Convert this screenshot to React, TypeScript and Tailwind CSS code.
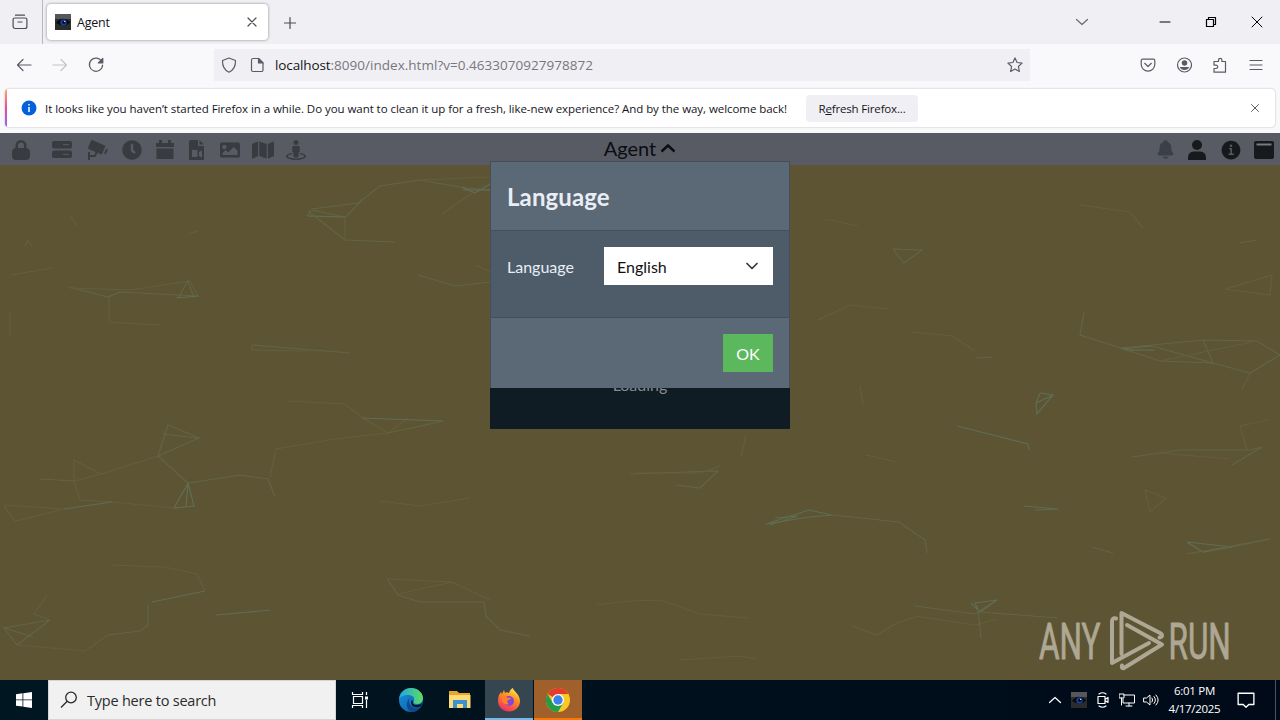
import type { ReactNode } from "react";
import { BiSolidCctv } from "react-icons/bi";
import { FaClock, FaImage, FaMap, FaStreetView } from "react-icons/fa";
import { IoInformationCircle, IoNotifications } from "react-icons/io5";

type Line = { points: string; tone: "faint" | "soft" | "strong" };

const tones = {
  faint: "stroke-[#655e3c]",
  soft: "stroke-[#626544]",
  strong: "stroke-[#606d55]",
};

// page coordinates, the canvas starts right below the toolbar
const lines: Line[] = [
  { points: "11,275 52,268", tone: "faint" },
  { points: "69,287 108,297 120,292 198,296", tone: "soft" },
  { points: "69,288 130,290 190,281 198,296", tone: "faint" },
  { points: "178,298 188,281 194,298", tone: "soft" },
  { points: "176,298 199,296", tone: "strong" },
  { points: "109,297 109,322 160,325", tone: "faint" },
  { points: "10,312 10,336", tone: "faint" },
  { points: "25,247 28,240 32,247", tone: "faint" },
  { points: "70,216 77,226", tone: "faint" },
  { points: "188,234 198,231", tone: "faint" },
  { points: "307,216 312,209 358,203 380,186 420,180 465,188 490,190", tone: "soft" },
  { points: "308,216 346,217 362,200", tone: "soft" },
  { points: "308,216 346,217", tone: "strong" },
  { points: "312,210 345,217", tone: "soft" },
  { points: "308,211 345,240 395,242", tone: "soft" },
  { points: "345,217 345,240", tone: "faint" },
  { points: "420,180 490,177", tone: "faint" },
  { points: "442,214 472,193", tone: "faint" },
  { points: "462,187 475,193 490,184", tone: "strong" },
  { points: "463,190 490,190", tone: "strong" },
  { points: "418,275 455,286 490,282", tone: "soft" },
  { points: "476,265 490,272", tone: "faint" },
  { points: "252,345 252,350 310,351", tone: "faint" },
  { points: "252,345 350,353", tone: "soft" },
  { points: "288,401 345,404 366,420 388,433 408,418", tone: "faint" },
  { points: "362,418 443,421", tone: "strong" },
  { points: "388,433 430,424 443,421", tone: "soft" },
  { points: "388,433 335,439 276,449 270,477", tone: "faint" },
  { points: "158,456 168,425 199,438 158,456", tone: "soft" },
  { points: "162,434 199,438", tone: "soft" },
  { points: "158,456 101,474 74,460 74,481 101,474", tone: "faint" },
  { points: "40,479 74,481", tone: "soft" },
  { points: "158,456 188,483 240,475 268,479 275,497", tone: "soft" },
  { points: "188,483 174,508 194,506 188,483 186,506", tone: "strong" },
  { points: "74,481 80,500 112,502 174,508", tone: "faint" },
  { points: "64,509 112,502", tone: "strong" },
  { points: "4,506 15,521 64,509 4,505", tone: "faint" },
  { points: "112,565 165,567 197,574 205,591", tone: "faint" },
  { points: "152,602 205,591", tone: "strong" },
  { points: "216,615 270,610", tone: "strong" },
  { points: "108,635 140,631 148,625 148,605", tone: "soft" },
  { points: "17,645 85,651 108,635", tone: "faint" },
  { points: "4,628 50,620 17,645 4,628 33,637", tone: "soft" },
  { points: "47,595 34,614 50,620", tone: "faint" },
  { points: "387,579 452,582 490,600", tone: "faint" },
  { points: "387,579 398,595 420,602 484,602 486,616 500,630 530,636", tone: "soft" },
  { points: "398,594 452,582", tone: "faint" },
  { points: "380,501 420,506 470,498", tone: "faint" },
  { points: "630,474 718,471 700,488 676,485", tone: "soft" },
  { points: "636,473 700,473 720,466", tone: "faint" },
  { points: "597,605 630,601 660,600 700,614 748,618", tone: "faint" },
  { points: "680,660 740,656 756,659", tone: "faint" },
  { points: "741,457 746,436", tone: "faint" },
  { points: "866,455 897,462", tone: "faint" },
  { points: "825,219 858,226", tone: "faint" },
  { points: "893,249 922,250 904,263 893,249", tone: "soft" },
  { points: "818,320 850,305 888,309", tone: "faint" },
  { points: "912,332 952,336 975,351", tone: "faint" },
  { points: "976,358 992,357", tone: "soft" },
  { points: "860,386 863,405", tone: "faint" },
  { points: "1080,205 1130,212 1143,228", tone: "faint" },
  { points: "1240,243 1256,240", tone: "soft" },
  { points: "1225,289 1270,295 1272,275 1225,289", tone: "faint" },
  { points: "1084,312 1080,335 1121,348 1203,340 1257,341 1280,355", tone: "soft" },
  { points: "1121,348 1160,361 1213,363 1250,373 1280,355", tone: "soft" },
  { points: "1121,349 1152,346", tone: "strong" },
  { points: "1125,350 1155,350", tone: "strong" },
  { points: "1152,346 1213,363 1203,340", tone: "soft" },
  { points: "1160,361 1257,341", tone: "faint" },
  { points: "1250,373 1242,390", tone: "faint" },
  { points: "1040,393 1053,395 1036,403 1040,393", tone: "strong" },
  { points: "1036,403 1037,414 1053,395", tone: "strong" },
  { points: "957,426 1028,444 1029,450", tone: "strong" },
  { points: "1132,457 1180,450 1250,450 1262,447 1232,465", tone: "soft" },
  { points: "1247,450 1240,426 1268,420", tone: "faint" },
  { points: "1160,453 1230,459", tone: "faint" },
  { points: "1145,490 1166,498 1150,512 1145,490", tone: "faint" },
  { points: "766,524 809,517 832,515 809,510 766,524", tone: "strong" },
  { points: "775,518 798,516 770,525", tone: "strong" },
  { points: "832,515 899,522 925,540 927,553", tone: "soft" },
  { points: "1024,506 1058,509 1035,510", tone: "strong" },
  { points: "1092,547 1113,553", tone: "soft" },
  { points: "1187,542 1232,547 1203,552 1187,542", tone: "strong" },
  { points: "1187,554 1270,539", tone: "soft" },
  { points: "1232,547 1270,539", tone: "soft" },
  { points: "853,626 877,635 895,624 915,617", tone: "faint" },
  { points: "915,606 975,614 997,600", tone: "soft" },
  { points: "915,616 975,625 997,619", tone: "faint" },
  { points: "971,603 980,612 997,600 975,603 978,609", tone: "strong" },
  { points: "978,610 981,638", tone: "soft" },
  { points: "980,612 1058,618", tone: "soft" },
];

function Lines() {
  return (
    <svg
      className="absolute inset-0 h-full w-full"
      viewBox="0 165 1280 515"
      fill="none"
      strokeWidth="1.2"
    >
      {lines.map((line) => (
        <polyline key={line.points} points={line.points} className={tones[line.tone]} />
      ))}
    </svg>
  );
}

function Glyph({
  children,
  className = "size-4",
}: {
  children: ReactNode;
  className?: string;
}) {
  return (
    <svg
      viewBox="0 0 16 16"
      className={`${className} shrink-0`}
      fill="none"
      stroke="currentColor"
      strokeWidth="1.2"
      strokeLinecap="round"
      strokeLinejoin="round"
    >
      {children}
    </svg>
  );
}

function EyeLogo() {
  return (
    <svg viewBox="0 0 16 16" className="size-4 shrink-0">
      <rect width="16" height="16" fill="#2b2c2e" />
      <rect width="16" height="5" fill="#55575a" />
      <path d="M1 9q6-8 14-1-5 7-14 1Z" fill="#090a10" />
      <circle cx="8.5" cy="8.5" r="3.2" fill="#183f91" />
      <circle cx="8.8" cy="8.2" r="1.5" fill="#04060d" />
      <circle cx="9.6" cy="7.4" r=".7" fill="#d7e5ff" />
    </svg>
  );
}

function TabStrip() {
  return (
    <div className="flex h-11 items-center bg-[#f0f0f4] text-[#4b4b54]">
      <div className="flex h-11 w-[43px] items-center justify-center border-r border-[#b8b8bd] pr-0.5">
        <Glyph className="size-4">
          <path d="M3.500 1.200h9M2.600 4h10.800a1.500 1.500 0 0 1 1.500 1.500v7a2 2 0 0 1-2 2H3.100a2 2 0 0 1-2-2v-7A1.500 1.500 0 0 1 2.600 4ZM6 8h4" />
        </Glyph>
      </div>
      <div className="ml-1 flex h-9 w-[221px] items-center rounded bg-white pl-2 pr-2 shadow-[0_0_3px_rgba(0,0,0,0.45)]">
        <EyeLogo />
        <span className="ml-[6px] flex-1 pt-[2px] text-[12.5px] tracking-[-0.2px] text-[#15141a]">Agent</span>
        <Glyph className="size-4">
          <path d="m4 4 8 8M12 4l-8 8" />
        </Glyph>
      </div>
      <Glyph className="ml-[14px] mt-px size-4">
        <path d="M8 2.500v11M2.500 8h11" />
      </Glyph>
      <div className="ml-auto flex items-center">
        <Glyph className="mr-[67px] size-4 text-[#6b6b73]">
          <path d="m2.500 5.500 5.500 5 5.500-5" />
        </Glyph>
        <div className="flex items-center gap-[30px] pr-[15px] text-black">
          <Glyph>
            <path d="M3 8h10" strokeWidth="1" />
          </Glyph>
          <Glyph>
            <path d="M3.500 5.500h7v7h-7ZM5.500 5.500v-2h7v7h-2" />
          </Glyph>
          <Glyph>
            <path d="m3 3 10 10M13 3 3 13" strokeWidth="1" />
          </Glyph>
        </div>
      </div>
    </div>
  );
}

function NavBar() {
  return (
    <div className="flex h-[41px] items-center bg-[#f9f9fb] text-[#5b5b66]">
      <div className="flex w-[214px] items-center gap-5 pl-4">
        <Glyph>
          <path d="M15 8H1.5M7 2.5 1.5 8 7 13.5" />
        </Glyph>
        <Glyph className="size-4 text-[#c4c4ca]">
          <path d="M1 8h13.5M9 2.5 14.5 8 9 13.5" />
        </Glyph>
        <Glyph>
          <path d="M13.800 4.500A6.600 6.600 0 1 0 14.600 8" />
          <path d="M14.800 1.500V6h-4.500Z" fill="currentColor" />
        </Glyph>
      </div>
      <div className="flex h-8 w-[816px] items-center bg-[#f0f0f4] pl-[7px] pr-[7px]">
        <Glyph>
          <path d="M8 1 14.5 3.5C14.7 9 12.5 13.2 8 15.2 3.5 13.2 1.3 9 1.5 3.5Z" />
        </Glyph>
        <Glyph className="ml-3 size-4">
          <path d="M4 1.500h5.500L14 6v7a1.500 1.500 0 0 1-1.500 1.500h-8.500A1.500 1.500 0 0 1 2.500 13V3A1.500 1.500 0 0 1 4 1.500Z" />
          <path d="M9.5 1.5V6H14Z" fill="currentColor" />
        </Glyph>
        <span className="ml-[10px] flex-1 pt-px text-[13.5px] tracking-[0.025px] text-[#77777e]">
          <span className="tracking-[-0.12px] text-[#15141a]">localhost</span>:8090/index.html?v=0.4633070927978872
        </span>
        <Glyph>
          <path d="m8 .9 2.1 4.6 5 .6-3.7 3.4 1 5L8 12l-4.4 2.5 1-5L.9 6.1l5-.6Z" />
        </Glyph>
      </div>
      <div className="ml-auto flex items-center gap-5 pr-4">
        <Glyph>
          <path d="M2.5 2.2h11A1.3 1.3 0 0 1 14.8 3.5v3.8a6.8 6.8 0 0 1-13.6 0V3.500a1.300 1.300 0 0 1 1.300-1.300ZM4.700 6.300 8 9.500l3.300-3.200" />
        </Glyph>
        <Glyph>
          <circle cx="8.500" cy="8" r="7" />
          <circle cx="8.500" cy="6" r="2.200" fill="currentColor" />
          <path d="M4.500 10.500h8q-1.500 2-4 2t-4-2Z" fill="currentColor" />
        </Glyph>
        <Glyph>
          <path d="M2 4.500h4.500V3a1.700 1.700 0 0 1 3.400 0v1.500h3.600v10.700H2v-3.700h2a1.700 1.700 0 0 0 0-3.400H2Z" />
        </Glyph>
        <Glyph>
          <path d="M2 3.500h12M2 8h12M2 12.500h12" />
        </Glyph>
      </div>
    </div>
  );
}

function Notice() {
  return (
    <div className="h-12 bg-[#f9f9fb] pl-[5px] pr-[5px] pt-[4px]">
      <div className="flex h-[38px] items-center overflow-hidden rounded bg-white text-[11.500px] text-[#15141a] shadow-[0_0_2px_rgba(0,0,0,0.3)]">
        <div className="h-full w-[2px] bg-gradient-to-b from-[#ffa266] via-[#e44a94] to-[#9059ff]" />
        <svg viewBox="0 0 16 16" className="ml-[14px] size-4 shrink-0">
          <circle cx="8" cy="8" r="7.500" fill="#0560dd" />
          <path d="M8 4v1.500M8 7v5" stroke="white" strokeWidth="1.500" />
        </svg>
        <span className="ml-2 w-[742px] whitespace-nowrap pt-[2px] tracking-[-0.056px]">
          It looks like you haven’t started Firefox in a while. Do you want to clean it up for a fresh, like-new experience? And by the way, welcome back!
        </span>
        <button className="ml-[19px] h-[27px] w-[112px] rounded bg-[#f0f0f4] pt-px whitespace-nowrap tracking-[-0.16px]">
          R<span className="underline">e</span>fresh Firefox...
        </button>
        <Glyph className="ml-auto mr-[12px] size-4 text-[#5b5b66]">
          <path d="m4.500 4.500 7 7M11.500 4.500l-7 7" strokeWidth="1" />
        </Glyph>
      </div>
    </div>
  );
}

function AgentBar() {
  return (
    <div className="flex h-8 items-center justify-between bg-[#585b64] font-['Lato',sans-serif] text-[#383b3f]">
      <div className="flex w-[400px] items-center pl-[12px] pt-px">
        <svg viewBox="0 0 18 20" className="h-5 w-[18px]" fill="currentColor">
          <path
            fillRule="evenodd"
            d="M3.500 8V5.500a5.500 5.500 0 0 1 11 0V8H15q3 1 3 4.500v3q0 4.500-4 4.500H4q-4 0-4-4.500v-3Q0 9 3 8ZM6 8h6V5.500a3 3 0 0 0-6 0Z"
          />
        </svg>
        <svg viewBox="0 0 20 17" className="ml-[22px] h-[17px] w-5" fill="currentColor">
          <rect width="20" height="7.500" rx="2" />
          <rect y="9.500" width="20" height="7.500" rx="2" />
          <path d="M11 3.700h6M11 13.300h6" stroke="#585b64" strokeWidth="1" />
        </svg>
        <BiSolidCctv className="ml-[14px] size-6" />
        <FaClock className="ml-[12px] size-5" />
        <svg viewBox="0 0 18 19" className="ml-[14px] h-[19px] w-[18px]" fill="currentColor">
          <path d="M0 3h3V0h3v3h6V0h3v3h3v4H0ZM.500 8.500h17V19H.500Z" />
        </svg>
        <svg viewBox="0 0 20 20" className="ml-[13px] size-5" fill="currentColor">
          <path
            fillRule="evenodd"
            d="M4 0h7v6h6v14H2V2q0-2 2-2ZM12.500 0 17 4.500h-4.500ZM5 10v7h5.500V10ZM12 12v4l3 1.500v-7Z"
          />
        </svg>
        <FaImage className="ml-[13px] size-5" />
        <FaMap className="ml-[12px] size-[22px]" />
        <FaStreetView className="ml-[12px] size-5" />
      </div>
      <div className="-mt-[3px] flex items-center gap-1 text-xl text-[#0b0d10]">
        Agent
        <svg viewBox="0 0 16 16" className="size-4" fill="none" stroke="currentColor" strokeWidth="2.400">
          <path d="m1.500 11.500 6.500-6 6.500 6" />
        </svg>
      </div>
      <div className="flex w-[400px] items-center justify-end pr-[6px] pt-px text-[#17191c]">
        <IoNotifications className="mr-3 size-[21px] text-[#3b3f48]" />
        <svg viewBox="0 0 18 20" className="mr-[13px] h-5 w-[18px]" fill="currentColor">
          <circle cx="9" cy="5" r="5" />
          <path d="M0 20v-2q0-6.500 6-6.500h6q6 0 6 6.500v2Z" />
        </svg>
        <IoInformationCircle className="mr-[11px] size-6" />
        <svg viewBox="0 0 20 18" className="h-[18px] w-5">
          <rect width="20" height="18" rx="2" fill="currentColor" />
          <path d="M2.500 3.500h15" stroke="#777b82" strokeWidth="2" />
        </svg>
      </div>
    </div>
  );
}

function LanguageDialog() {
  return (
    <div className="absolute left-[490px] top-[-4px] w-[300px] font-['Lato',sans-serif] text-[#e9eef5]">
      <div className="relative z-10 border border-[#454f59] border-b-0">
        <div className="flex h-[68px] items-center bg-[#5b6875] px-4 pt-[2px] text-2xl font-bold tracking-[0.12px]">
          Language
        </div>
        <div className="flex h-[88px] items-start border-y border-[#44505c] bg-[#4e5c6a] px-4 pt-4">
          <label className="w-[97px] pt-2 text-base">Language</label>
          <div className="flex h-[38px] flex-1 items-center justify-between bg-white pl-[13px] pr-[13px] pt-[2px] text-base text-[#111]">
            English
            <Glyph className="size-4 -translate-y-px text-[#343a40]">
              <path d="m3 5.500 5 5 5-5" strokeWidth="1.700" />
            </Glyph>
          </div>
        </div>
        <div className="flex h-[70px] items-center justify-end bg-[#5b6875] px-4">
          <button className="h-[38px] w-[50px] bg-[#5cb85c] pt-[2px] text-base text-white">OK</button>
        </div>
      </div>
      <div className="-mt-[31px] h-[72px] bg-[#101c24] pt-[16px] text-center text-base text-[#858b90]">
        Loading
      </div>
    </div>
  );
}

function Watermark() {
  return (
    <svg
      viewBox="1030 606 210 68"
      className="absolute bottom-[6px] right-[40px] h-[68px] w-[210px] overflow-visible text-[#aea793]"
      fill="none"
      stroke="currentColor"
      strokeWidth="4"
      strokeLinecap="round"
      strokeLinejoin="round"
    >
      <g
        fill="currentColor"
        strokeWidth="0.9"
        fontFamily="Roboto, sans-serif"
        fontSize="50"
      >
        <text transform="translate(1039 659) scale(.63 1)">ANY</text>
        <text transform="translate(1168.500 659) scale(.63 1)">RUN</text>
      </g>
      <path d="M1116 618.500q-4-1-4 3V663l37-20" />
      <path d="M1121.500 654v-41l39.500 20.500q3 2.500-1.500 4" />
      <path d="m1127 625 35 19.500-38 23.500q-3 1-2-2.500" />
    </svg>
  );
}

function Taskbar() {
  return (
    <div className="flex h-10 items-stretch bg-gradient-to-r from-[#001722] to-[#000a18] text-white">
      <div className="flex w-12 items-center justify-center">
        <svg viewBox="0 0 16 16" className="size-4" fill="white">
          <path d="M0 2.200 6.500 1.300v6.200H0ZM7.300 1.200 16 0v7.500H7.300ZM0 8.300h6.500v6.300L0 13.700ZM7.300 8.300H16V16l-8.700-1.200Z" />
        </svg>
      </div>
      <div className="flex w-72 items-center border border-[#d5d5d8] bg-[#f1f1f1] pl-[11px] text-[#2b2b2b]">
        <svg viewBox="0 0 18 18" className="size-[18px]" fill="none" stroke="currentColor" strokeWidth="1.300">
          <circle cx="11" cy="6.500" r="5.300" />
          <path d="M7.200 10.300 1 16.500" />
        </svg>
        <span className="ml-[9px] pt-[2px] text-[14.500px] tracking-[-0.22px]">Type here to search</span>
      </div>
      <div className="flex w-12 items-center justify-center">
        <svg viewBox="0 0 18 18" className="size-[18px]" fill="none" stroke="white" strokeWidth="1.200">
          <path d="M1.500 1v2.500h10V1M1.500 17v-2.500h10V17M2.500 5.500h9v7h-9ZM15.500 1v3M15.500 9v8" />
          <path d="M14 5.500h3v3h-3Z" fill="white" stroke="none" />
        </svg>
      </div>
      <div className="flex w-[53px] items-center justify-center">
        <svg viewBox="0 0 24 24" className="size-6">
          <defs>
            <linearGradient id="edge-top" x1="0" x2="1">
              <stop stopColor="#1fa7df" />
              <stop offset="1" stopColor="#5cdd62" />
            </linearGradient>
            <linearGradient id="edge-low" x1="0" x2="1" y2="1">
              <stop stopColor="#1991dc" />
              <stop offset="1" stopColor="#0b5ba8" />
            </linearGradient>
          </defs>
          <circle cx="12" cy="12" r="12" fill="url(#edge-low)" />
          <path d="M0 11C1 4 6 0 12 0c7 0 12 5 12 10 0 4-3 6-6 6-3 0-4-1-3-3 1-4-2-6-6-6-4 0-8 2-9 4Z" fill="url(#edge-top)" />
          <path d="M12 9c-4 3-2 10 4 11 3 .5 5-1 6-2-2 4-6 6-10 6-5-3-6-11 0-15Z" fill="#114a8b" />
          <path d="M14 13c-1 2 0 4 4 4 2 0 4-1 5-2l-1 3c-6 3-10 0-10-4 0-1 1-2 2-1Z" fill="#001620" />
        </svg>
      </div>
      <div className="flex w-12 items-center justify-center pr-[2px]">
        <svg viewBox="0 0 22 20" className="h-5 w-[22px]">
          <path d="M0 1h8l2 2h11v15H0Z" fill="#e9a52c" />
          <path d="M0 5h21.500v13H0Z" fill="#fddc78" />
          <path d="M4 18v-8h14v8h-4v-4H8v4Z" fill="#3c91cf" />
        </svg>
      </div>
      <div className="flex w-12 items-center justify-center border-b-2 border-[#76b9ed] bg-[#354650]">
        <svg viewBox="0 0 24 24" className="mt-px size-6">
          <defs>
            <linearGradient id="fox" x1=".8" y1="0" x2=".3" y2="1">
              <stop stopColor="#fff14a" />
              <stop offset=".45" stopColor="#ff8a22" />
              <stop offset="1" stopColor="#f0286c" />
            </linearGradient>
          </defs>
          <path d="M12 5c1-3 2-4 4-5 0 3 7 6 7 13 0 6-5 10.500-11 10.500S1 19 1 13c0-4 1-7 3-9l1 2 2-4 1 3c1-1 2-1 4 0Z" fill="url(#fox)" />
          <circle cx="12" cy="13" r="5" fill="#8347d5" />
          <path d="M5 9c3-1 4 0 6 1 2-.4 3 0 3 1l-3 1c-1 1-1 3 1 4-4 2-8-2-7-7Z" fill="#ff8125" />
        </svg>
      </div>
      <div className="ml-px flex w-12 items-center justify-center border-b-2 border-[#ff7700] bg-[#a0602b]">
        <svg viewBox="0 0 24 24" className="mt-[2px] size-6">
          <circle cx="12" cy="12" r="12" fill="#f9c923" />
          <path d="M12 12 1.600 6A12 12 0 0 1 22.400 6H12Z" fill="#e33b2e" />
          <path d="M1.600 6A12 12 0 0 0 12 24l5.200-9H6.800Z" fill="#269b4b" />
          <circle cx="12" cy="12" r="6" fill="white" />
          <circle cx="12" cy="12" r="4.700" fill="#3b82ed" />
        </svg>
      </div>
      <div className="ml-auto flex items-center border-r border-[#4a535e] pr-[20px] mr-1">
        <Glyph className="mr-2 size-4">
          <path d="m2.500 10.500 5.500-5 5.500 5" />
        </Glyph>
        <EyeLogo />
        <Glyph className="ml-2 size-4">
          <path d="M3 4.500h7v7H3ZM10 7.500l3-2v5l-3-2M4 2q3.500-2.500 7 0M4 14q3.500 2.500 7 0" />
        </Glyph>
        <Glyph className="ml-2 size-4">
          <path d="M5 3h10.500v8H4V7M10 11v3M7 14h6M.5 2H5v4H.5ZM2.500 6v7" strokeWidth="1" />
        </Glyph>
        <Glyph className="ml-2 size-4">
          <path d="M1 6h2.500L7 3v10L3.500 10H1ZM9 6q1.500 2 0 4M11 4.500q3 3.500 0 7M13 3q4.500 5 0 10" strokeWidth="1" />
        </Glyph>
        <div className="ml-[9px] w-[53px] text-center text-[11.500px] leading-[18px] tracking-[-0.3px] whitespace-nowrap">
          <div>6:01 PM</div>
          <div>4/17/2025</div>
        </div>
        <Glyph className="ml-[16px] size-[18px]">
          <path d="M1 2h14v10h-4.500L8 14.500 5.500 12H1Z" />
        </Glyph>
      </div>
    </div>
  );
}

export default function App() {
  return (
    <main className="flex h-[720px] w-[1280px] flex-col overflow-hidden bg-[#5c5433] font-['Open_Sans',sans-serif]">
      <TabStrip />
      <NavBar />
      <Notice />
      <AgentBar />
      <section className="relative min-h-0 flex-1">
        <Lines />
        <LanguageDialog />
        <Watermark />
      </section>
      <Taskbar />
    </main>
  );
}
